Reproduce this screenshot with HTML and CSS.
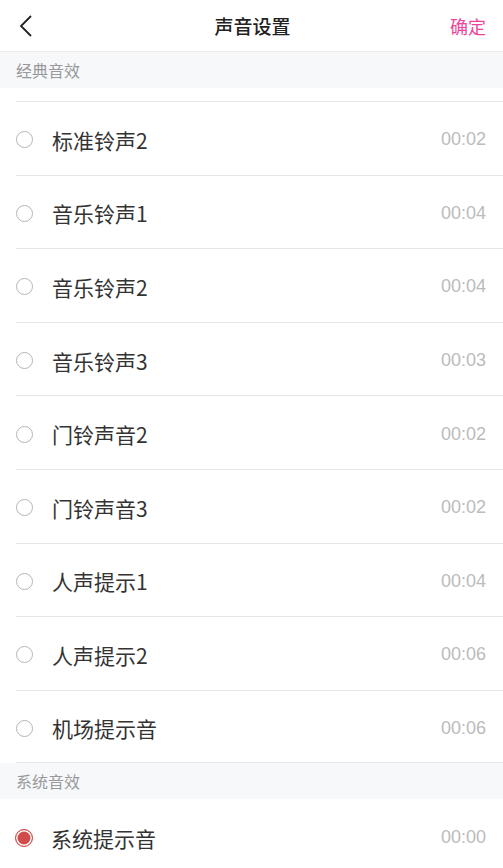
FILE: index.html
```html
<!DOCTYPE html>
<html lang="zh">
<head>
    <meta charset="UTF-8">
    <meta name="viewport" content="width=device-width, initial-scale=1.0">
    <title>声音设置</title>
    <link rel="stylesheet" href="styles.css">
</head>
<body>
    <div class="header">
        <span class="back">
            <svg width="14" height="22" viewBox="0 0 14 22"><path d="M12 1 L2 11 L12 21" fill="none" stroke="#222" stroke-width="1.8"/></svg>
        </span>
        <h1>声音设置</h1>
        <span class="confirm">确定</span>
    </div>

    <div class="section">经典音效</div>
    <ul class="list first">
        <li><span class="radio"></span><span class="name">标准铃声2</span><span class="time">00:02</span></li>
        <li><span class="radio"></span><span class="name">音乐铃声1</span><span class="time">00:04</span></li>
        <li><span class="radio"></span><span class="name">音乐铃声2</span><span class="time">00:04</span></li>
        <li><span class="radio"></span><span class="name">音乐铃声3</span><span class="time">00:03</span></li>
        <li><span class="radio"></span><span class="name">门铃声音2</span><span class="time">00:02</span></li>
        <li><span class="radio"></span><span class="name">门铃声音3</span><span class="time">00:02</span></li>
        <li><span class="radio"></span><span class="name">人声提示1</span><span class="time">00:04</span></li>
        <li><span class="radio"></span><span class="name">人声提示2</span><span class="time">00:06</span></li>
        <li><span class="radio"></span><span class="name">机场提示音</span><span class="time">00:06</span></li>
    </ul>

    <div class="section">系统音效</div>
    <ul class="list">
        <li class="checked"><span class="radio"></span><span class="name">系统提示音</span><span class="time">00:00</span></li>
    </ul>
</body>
</html>
```

FILE: styles.css
```css
body {
    margin: 0;
    padding: 0;
    background-color: #ffffff;
    font-family: "Noto Sans CJK SC", "Noto Sans", sans-serif;
    color: #333;
}
.header {
    height: 51px;
    display: flex;
    align-items: center;
    justify-content: space-between;
    padding: 0 17px 0 19px;
    border-bottom: 1px solid #ececec;
}
.back {
    width: 40px;
    display: flex;
    align-items: center;
}
.header h1 {
    margin: 0;
    font-size: 19px;
    font-weight: 500;
    color: #222;
}
.confirm {
    width: 40px;
    text-align: right;
    font-size: 18px;
    color: #f0449a;
}
.section {
    height: 36px;
    line-height: 36px;
    padding-left: 16px;
    background-color: #f7f8fa;
    font-size: 16px;
    color: #999;
}
.list {
    list-style: none;
    margin: 0;
    padding: 0 0 0 16px;
}
.list.first {
    padding-top: 13px;
}
.list.first li {
    border-top: 1px solid #e6e6e6;
}
.list.first li:last-child {
    border-bottom: 1px solid #e6e6e6;
}
.list li {
    height: 72.6px;
    display: flex;
    align-items: center;
    padding-right: 17px;
    padding-top: 3px;
    box-sizing: border-box;
    height: 73.6px;
}
.radio {
    width: 15px;
    height: 15px;
    border: 1px solid #b5b5b5;
    border-radius: 50%;
    box-sizing: content-box;
    flex-shrink: 0;
}
.checked .radio {
    width: 16px;
    height: 16px;
    background-color: #d24b4b;
    border: 1px solid #d24b4b;
    box-shadow: inset 0 0 0 1.5px #ffffff;
    margin-left: -1px;
}
.name {
    flex: 1;
    margin-left: 19px;
    font-size: 21px;
    color: #333;
}
.checked .name {
    margin-left: 18px;
}
.time {
    font-size: 18px;
    color: #bbb;
    font-family: "Helvetica Neue", "Liberation Sans", sans-serif;
}
```
